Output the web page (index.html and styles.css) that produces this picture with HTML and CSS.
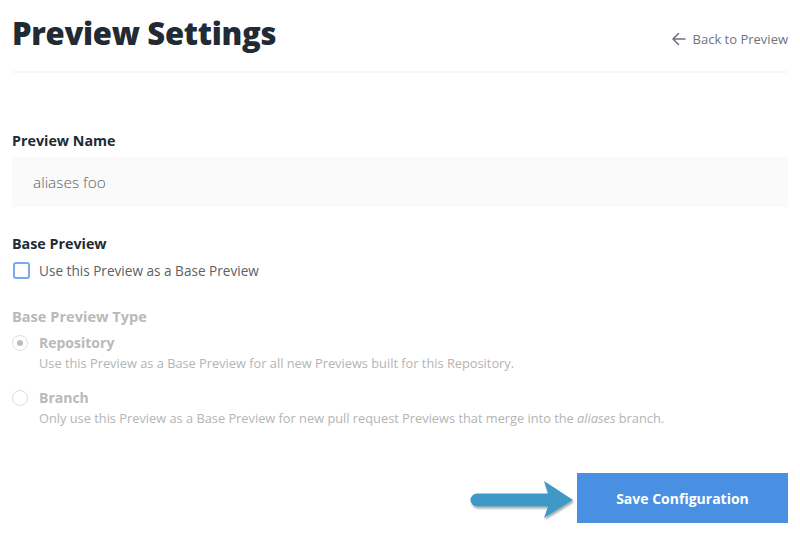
FILE: index.html
```html
<!DOCTYPE html>
<html>
<head>
<meta charset="utf-8">
<link rel="stylesheet" href="styles.css">
</head>
<body>
<div class="page">
  <header class="header">
    <h1 class="title">Preview Settings</h1>
    <a class="back" href="#">
      <svg class="back-icon" width="15" height="14" viewBox="0 0 15 14"><path d="M14 7H2M7.5 1.5L2 7l5.5 5.5" fill="none" stroke="#6d7480" stroke-width="1.6" stroke-linecap="round" stroke-linejoin="round"/></svg>
      <span>Back to Preview</span>
    </a>
  </header>
  <main class="form">
    <section class="field name-field">
      <label class="label">Preview Name</label>
      <div class="input">aliases foo</div>
    </section>
    <section class="field base-field">
      <div class="label">Base Preview</div>
      <div class="check-row">
        <span class="checkbox"></span>
        <span class="check-text">Use this Preview as a Base Preview</span>
      </div>
    </section>
    <section class="field type-field">
      <div class="label disabled">Base Preview Type</div>
      <div class="radio-row">
        <span class="radio checked"></span>
        <div class="radio-body">
          <div class="radio-title">Repository</div>
          <div class="radio-desc">Use this Preview as a Base Preview for all new Previews built for this Repository.</div>
        </div>
      </div>
      <div class="radio-row">
        <span class="radio"></span>
        <div class="radio-body">
          <div class="radio-title">Branch</div>
          <div class="radio-desc">Only use this Preview as a Base Preview for new pull request Previews that merge into the <em>aliases</em> branch.</div>
        </div>
      </div>
    </section>
    <div class="actions">
      <svg class="pointer" width="110" height="44" viewBox="0 0 110 44">
        <defs>
          <filter id="sh" x="-10%" y="-20%" width="130%" height="150%">
            <feDropShadow dx="1" dy="2" stdDeviation="1.2" flood-color="#000" flood-opacity="0.35"/>
          </filter>
        </defs>
        <path d="M8 16.5 H79 L75 4 L104 23 L75 41 L79 29.5 H8 A6.5 6.5 0 0 1 8 16.5 Z" fill="#3f98c6" filter="url(#sh)"/>
      </svg>
      <button class="save">Save Configuration</button>
    </div>
  </main>
</div>
</body>
</html>
```
FILE: styles.css
```css
* { box-sizing: border-box; }
html, body { margin: 0; padding: 0; background: #fff; }
body {
  font-family: "Open Sans", "Noto Sans", sans-serif;
  color: #222a33;
}
.page { padding: 0 12px; }
.header {
  display: flex;
  justify-content: space-between;
  align-items: center;
  height: 73px;
  border-bottom: 2px solid #f7f7f7;
}
.title {
  margin: 0;
  font-size: 31px;
  font-weight: 800;
  letter-spacing: -0.3px;
  color: #222a33;
  line-height: 1;
  margin-top: -5px;
}
.back {
  display: flex;
  align-items: center;
  gap: 7px;
  color: #6d7480;
  text-decoration: none;
  font-size: 13px;
  margin-top: 6px;
}
.back-icon { display: block; }
.form { padding-top: 58px; }
.field { display: flex; flex-direction: column; }
.label {
  font-size: 14.3px;
  font-weight: 700;
  color: #222a33;
  line-height: 20px;
}
.label.disabled { color: #b9b9b9; font-size: 14.6px; }
.input {
  margin-top: 6px;
  height: 50px;
  background: #fafafa;
  display: flex;
  align-items: center;
  padding-left: 21px;
  font-size: 15.4px;
  font-weight: 300;
  color: #5b5f66;
}
.base-field { margin-top: 27px; }
.check-row {
  display: flex;
  align-items: center;
  gap: 9px;
  margin-top: 7px;
}
.checkbox {
  width: 17px;
  height: 17px;
  border: 2px solid #79a9ee;
  border-radius: 3px;
  margin-left: 1px;
}
.check-text { font-size: 13.6px; color: #5b5f66; }
.type-field { margin-top: 26px; }
.radio-row {
  display: flex;
  gap: 11px;
  margin-top: 7px;
}
.radio-row + .radio-row { margin-top: 15px; }
.radio {
  flex: none;
  width: 16px;
  height: 16px;
  border-radius: 50%;
  border: 1px solid #dedede;
  margin-top: 2px;
  position: relative;
  background: #fff;
}
.radio.checked::after {
  content: "";
  position: absolute;
  left: 4px; top: 4px;
  width: 6px; height: 6px;
  border-radius: 50%;
  background: #bdbdbd;
}
.radio-title {
  font-size: 14px;
  font-weight: 700;
  color: #b9b9b9;
  line-height: 20px;
}
.radio-desc {
  font-size: 12.8px;
  color: #b4b4b4;
  line-height: 20px;
}
.actions {
  display: flex;
  justify-content: flex-end;
  align-items: center;
  margin-top: 45px;
  gap: 2px;
}
.pointer { display: block; margin-top: 2px; margin-right: -4px; }
.save {
  position: relative;
  width: 211px;
  height: 50px;
  border: 0;
  background: #4a90e2;
  color: #fff;
  font-family: "Open Sans", "Noto Sans", sans-serif;
  font-size: 14px;
  font-weight: 700;
}
```
